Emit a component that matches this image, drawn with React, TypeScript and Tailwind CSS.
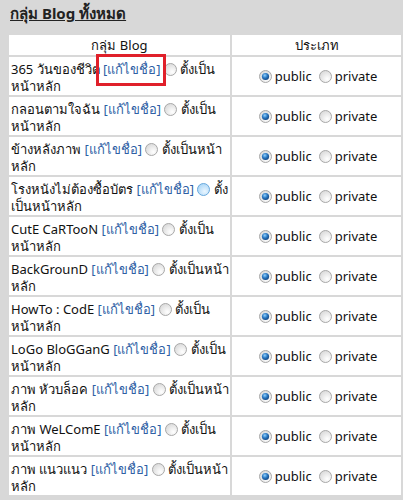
import React from "react";

type Row = { name: string; l1: string; l2: string; hover?: boolean };

const rows: Row[] = [
  { name: "365 วันของชีวิต", l1: "ตั้งเป็น", l2: "หน้าหลัก" },
  { name: "กลอนตามใจฉัน", l1: "ตั้งเป็น", l2: "หน้าหลัก" },
  { name: "ข้างหลังภาพ", l1: "ตั้งเป็นหน้า", l2: "หลัก" },
  { name: "โรงหนังไม่ต้องซื้อบัตร", l1: "ตั้ง", l2: "เป็นหน้าหลัก", hover: true },
  { name: "CutE CaRTooN", l1: "ตั้งเป็น", l2: "หน้าหลัก" },
  { name: "BackGrounD", l1: "ตั้งเป็นหน้า", l2: "หลัก" },
  { name: "HowTo : CodE", l1: "ตั้งเป็น", l2: "หน้าหลัก" },
  { name: "LoGo BloGGanG", l1: "ตั้งเป็น", l2: "หน้าหลัก" },
  { name: "ภาพ หัวบล็อค", l1: "ตั้งเป็นหน้า", l2: "หลัก" },
  { name: "ภาพ WeLComE", l1: "ตั้งเป็น", l2: "หน้าหลัก" },
  { name: "ภาพ แนวแนว", l1: "ตั้งเป็นหน้า", l2: "หลัก" },
];

function Radio({ checked = false, hover = false }: { checked?: boolean; hover?: boolean }) {
  return (
    <svg width="13" height="13" viewBox="0 0 13 13" className="inline-block align-[-2px]">
      <defs>
        <radialGradient id="rg" cx="0.65" cy="0.7" r="0.8">
          <stop offset="0" stopColor="#ffffff" />
          <stop offset="1" stopColor="#d6d6d6" />
        </radialGradient>
        <radialGradient id="rgh" cx="0.6" cy="0.65" r="0.8">
          <stop offset="0" stopColor="#eaf6ff" />
          <stop offset="1" stopColor="#9fd0f5" />
        </radialGradient>
        <radialGradient id="dot" cx="0.4" cy="0.35" r="0.7">
          <stop offset="0" stopColor="#8fd0ff" />
          <stop offset="0.5" stopColor="#2b79c2" />
          <stop offset="1" stopColor="#0f3f7a" />
        </radialGradient>
      </defs>
      <circle cx="6.5" cy="6.5" r="6" fill={hover ? "url(#rgh)" : "url(#rg)"} stroke={hover ? "#6aa9dc" : "#a8a8a8"} strokeWidth="1" />
      {checked && <circle cx="6.5" cy="6.5" r="3.6" fill="url(#dot)" />}
    </svg>
  );
}

export default function App() {
  return (
    <div
      className="w-[403px] h-[500px] overflow-hidden bg-[#d8d8d8] text-[13px] text-[#111]"
      style={{ fontFamily: "Tahoma, 'Noto Sans', 'Liberation Sans', sans-serif" }}
    >
      <div className="h-[35px] pl-[10px] pt-[2px]">
        <span className="font-bold text-[15px] underline text-[#222]">กลุ่ม Blog ทั้งหมด</span>
      </div>
      <div className="ml-[9px] w-[392px] grid grid-cols-[221px_169px] gap-[2px]">
        <div className="bg-white h-[20px] flex items-center justify-center leading-[18px]">กลุ่ม Blog</div>
        <div className="bg-white h-[20px] flex items-center justify-center leading-[18px]">ประเภท</div>
        {rows.map((r, i) => (
          <React.Fragment key={i}>
            <div className="bg-white h-[38px] pl-[2px] pt-[4px] leading-[17px] whitespace-nowrap">
              <div>
                {r.name}{" "}
                <span className="relative text-[#2f5fa5]">
                  [แก้ไขชื่อ]
                  {i === 0 && (
                    <span className="absolute left-[-7px] right-[-5px] top-[-6px] h-[32px] border-[3px] border-[#e0202a]" />
                  )}
                </span>{" "}
                <Radio hover={r.hover} /> {r.l1}
              </div>
              <div>{r.l2}</div>
            </div>
            <div className="bg-white h-[38px] flex items-center justify-center gap-[3px] pt-[1px] pl-[3px]">
              <Radio checked />
              <span>public</span>
              <span className="ml-[4px]"><Radio /></span>
              <span>private</span>
            </div>
          </React.Fragment>
        ))}
      </div>
    </div>
  );
}
